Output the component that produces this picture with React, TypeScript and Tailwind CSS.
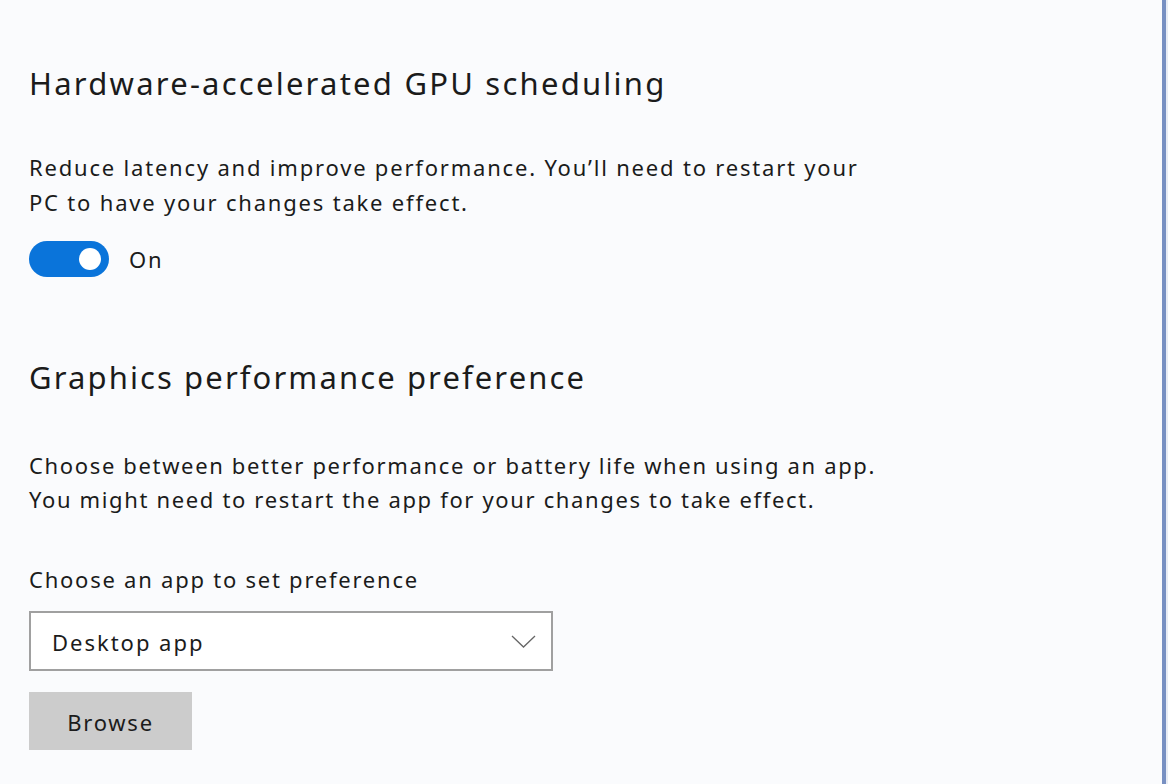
import React from "react";

export default function App() {
  return (
    <div
      className="w-[1168px] h-[784px] bg-[#fafbfd] flex overflow-hidden text-[#1b1b1b]"
      style={{ fontFamily: '"Noto Sans", "Open Sans", sans-serif' }}
    >
      <div className="flex-1 pl-[29px] pt-[63px] flex flex-col items-start">
        <h1 className="text-[31px] leading-[40px] font-normal tracking-[0.072em] whitespace-nowrap">Hardware-accelerated GPU scheduling</h1>
        <p className="mt-[47px] text-[22px] leading-[35px] tracking-[0.082em] whitespace-nowrap">
          Reduce latency and improve performance. You’ll need to restart your
          <br />
          PC to have your changes take effect.
        </p>
        <div className="mt-[21px] flex items-center h-[36px]">
          <div className="w-[80px] h-[36px] rounded-full bg-[#0a74da] flex items-center justify-end pr-[8px]">
            <div className="w-[22px] h-[22px] rounded-full bg-white" />
          </div>
          <span className="ml-[20px] text-[22px] leading-[35px] tracking-[0.08em]">On</span>
        </div>
        <h2 className="mt-[80px] text-[31px] leading-[40px] font-normal tracking-[0.068em] whitespace-nowrap">Graphics performance preference</h2>
        <p className="mt-[51px] text-[22px] leading-[34px] tracking-[0.075em] whitespace-nowrap">
          Choose between better performance or battery life when using an app.
          <br />
          You might need to restart the app for your changes to take effect.
        </p>
        <p className="mt-[46px] text-[22px] leading-[35px] tracking-[0.08em]">Choose an app to set preference</p>
        <div className="mt-[14px] w-[524px] h-[60px] border-2 border-[#a0a0a0] bg-white flex items-center pl-[21px] pr-[15px]">
          <span className="flex-1 text-[22px] leading-[35px] tracking-[0.09em] pt-[2px]">Desktop app</span>
          <svg width="25" height="13" viewBox="0 0 25 13" fill="none">
            <path d="M1 1 L12.5 12 L24 1" stroke="#666" strokeWidth="1.3" />
          </svg>
        </div>
        <button className="mt-[21px] w-[163px] h-[58px] bg-[#cccccc] text-[22px] leading-[35px] tracking-[0.08em] text-[#1b1b1b] pt-[2px]">
          Browse
        </button>
      </div>
      <div className="w-[6px] h-full flex">
        <div className="w-[4px] h-full bg-[#7890c2]" />
        <div className="w-[2px] h-full bg-[#e8ecf4]" />
      </div>
    </div>
  );
}
